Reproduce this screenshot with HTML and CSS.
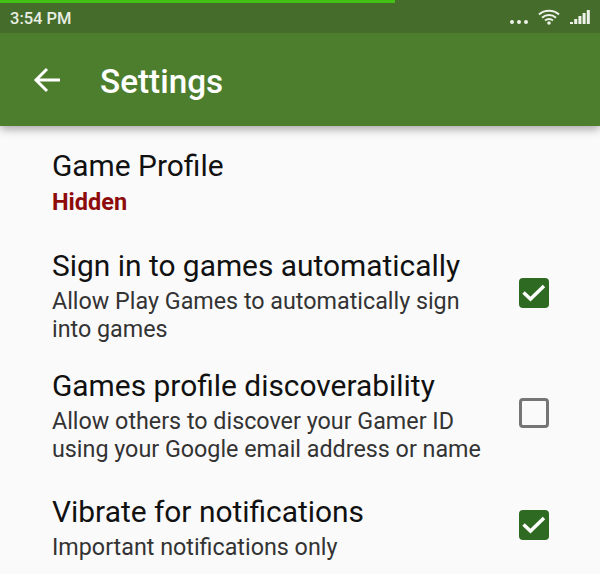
FILE: index.html
```html
<!DOCTYPE html>
<html lang="en">
<head>
<meta charset="utf-8">
<title>Settings</title>
<link rel="stylesheet" href="styles.css">
</head>
<body>
<div class="screen">
  <header class="header">
    <div class="statusbar">
      <div class="progress"></div>
      <div class="status-row">
        <span class="time">3:54 PM</span>
        <div class="status-icons">
          <svg class="dots" width="18" height="4" viewBox="0 0 18 4"><circle cx="2" cy="2" r="2"/><circle cx="9" cy="2" r="2"/><circle cx="16" cy="2" r="2"/></svg>
          <svg class="wifi" width="22" height="16" viewBox="0 0 22 16"><path d="M1 5.500C6.500.5 15.500.5 21 5.500M4 8.700C8 5.200 14 5.200 18 8.700M7 11.500C9.500 9.700 12.500 9.700 15 11.500" /><circle cx="11" cy="14" r="1.800"/></svg>
          <svg class="signal" width="20" height="16" viewBox="0 0 20 16"><rect x="0" y="13" width="3" height="2"/><rect x="4.200" y="10" width="3" height="5"/><rect x="8.400" y="7" width="3" height="8"/><rect x="12.600" y="4" width="3" height="11"/><rect x="16.800" y="1" width="3" height="14"/></svg>
        </div>
      </div>
    </div>
    <div class="toolbar">
      <svg class="back" width="28" height="26" viewBox="0 0 28 26"><path d="M27 13H3M14 2L3 13l11 11"/></svg>
      <h1 class="title">Settings</h1>
    </div>
  </header>
  <main class="list">
    <section class="item item-profile">
      <div class="text">
        <div class="name">Game Profile</div>
        <div class="hidden-label">Hidden</div>
      </div>
    </section>
    <section class="item item-auto">
      <div class="text">
        <div class="name">Sign in to games automatically</div>
        <div class="desc">Allow Play Games to automatically sign<br>into games</div>
      </div>
      <span class="check on"><svg width="30" height="30" viewBox="0 0 30 30"><path d="M4.500 14.500L11.500 21 25 8"/></svg></span>
    </section>
    <section class="item item-disc">
      <div class="text">
        <div class="name">Games profile discoverability</div>
        <div class="desc">Allow others to discover your Gamer ID<br>using your Google email address or name</div>
      </div>
      <span class="check"></span>
    </section>
    <section class="item item-vibrate">
      <div class="text">
        <div class="name">Vibrate for notifications</div>
        <div class="desc">Important notifications only</div>
      </div>
      <span class="check on"><svg width="30" height="30" viewBox="0 0 30 30"><path d="M4.500 14.500L11.500 21 25 8"/></svg></span>
    </section>
  </main>
</div>
</body>
</html>
```
FILE: styles.css
```css
* { box-sizing: border-box; }
html, body { margin: 0; padding: 0; }
body { width: 600px; height: 574px; overflow: hidden; background: #fafafa; font-family: Roboto, "Liberation Sans", sans-serif; }
.screen { width: 600px; height: 574px; overflow: hidden; }
.header { background: #4d7e2e; box-shadow: 0 3px 9px rgba(0,0,0,.35); height: 126px; position: relative; }
.statusbar { height: 33px; background: #456c2b; display: flex; flex-direction: column; }
.progress { width: 395px; height: 3px; background: #43c016; }
.status-row { flex: 1; display: flex; align-items: center; justify-content: space-between; padding: 0 10px 0 10px; }
.time { color: #e9eee4; font-size: 16.500px; font-weight: 500; }
.status-icons { display: flex; align-items: center; gap: 10px; }
.dots { fill: #eef2ea; margin-top: 8px; }
.wifi { fill: #eef2ea; margin-top: -3px; }
.wifi path { fill: none; stroke: #eef2ea; stroke-width: 2; }
.signal { fill: #eef2ea; margin-top: -3px; }
.toolbar { height: 93px; display: flex; align-items: center; padding: 4px 0 0 33px; }
.back { fill: none; stroke: #fff; stroke-width: 3; margin-right: 39px; margin-top: -3px; }
.title { margin: 0; color: #fff; font-size: 33.300px; font-weight: 500; letter-spacing: 0; }
.list { padding: 22px 0 0 52px; }
.item { display: flex; align-items: center; justify-content: space-between; padding-right: 51px; }
.item-auto { margin-top: 31px; }
.item-disc { margin-top: 25px; }
.item-vibrate { margin-top: 31px; }
.name { color: #111; font-size: 29.900px; line-height: 36px; }
.desc { color: #333; font-size: 23.300px; line-height: 28px; margin-top: 3px; }
.hidden-label { color: #8e0b0b; font-size: 23.500px; font-weight: 700; line-height: 30px; margin-top: 3px; }
.check { width: 30px; height: 30px; border: 3px solid #757575; border-radius: 4px; display: block; flex: none; margin-top: -5px; }
.check.on { background: #2f6a22; border: 0; }
.check svg { display: block; fill: none; stroke: #fff; stroke-width: 3.500; }
```
